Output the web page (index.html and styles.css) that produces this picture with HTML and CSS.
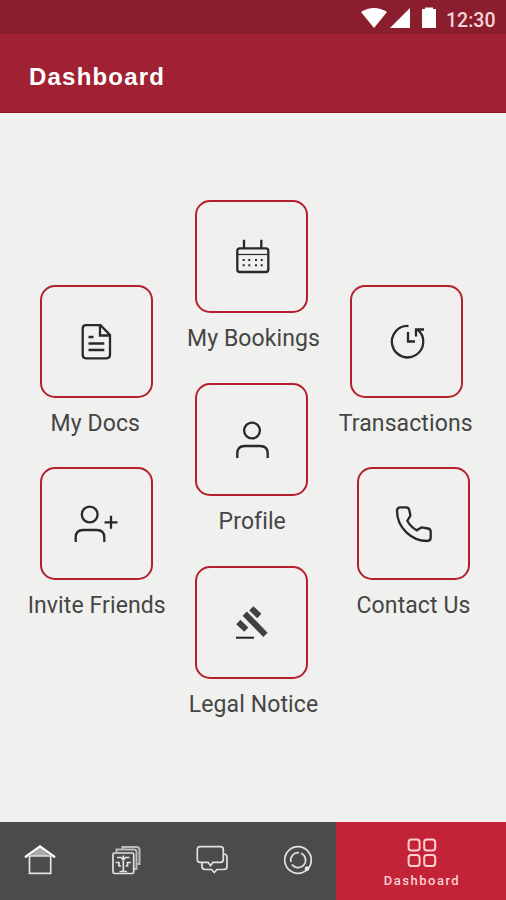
FILE: index.html
```
<!DOCTYPE html>
<html lang="en">
<head>
    <meta charset="UTF-8">
    <title>Dashboard</title>
    <link rel="stylesheet" href="styles.css">
</head>
<body>
    <div class="status-bar">
        <svg class="status-icons" width="78" height="24" viewBox="0 0 78 24">
            <path d="M1 6Q14-2 27 6L14 22Z"/>
            <path d="M50 2V22H30Z"/>
            <path d="M62 3h3V1.500h8V3h3v19H62Z"/>
        </svg>
        <span class="time">12:30</span>
    </div>
    <header class="header">
        <h1>Dashboard</h1>
    </header>

    <main class="menu">
        <div class="column side">
            <a class="item">
                <span class="tile">
                    <svg class="icon" viewBox="0 0 60 60">
                        <path d="M20 13.200H34.500L44 23V42.800Q44 46.300 40.500 46.300H20Q16.700 46.300 16.700 42.800V16.700Q16.700 13.200 20 13.200Z"/>
                        <path d="M34 13.500V23.500H44M22.500 25H27.500M22.500 31.500H38.300M22.500 38H38.300"/>
                    </svg>
                </span>
                <span class="label docs">My Docs</span>
            </a>
            <a class="item">
                <span class="tile">
                    <svg class="icon" viewBox="0 0 60 60">
                        <circle cx="23.700" cy="20.500" r="7.900"/>
                        <path d="M9.700 48V43.500Q9.700 36 17.200 36H30.800Q38.300 36 38.300 43.500V48M45 21.800V34.800M38.500 28.300H51.500"/>
                    </svg>
                </span>
                <span class="label invite">Invite Friends</span>
            </a>
        </div>

        <div class="column middle">
            <a class="item">
                <span class="tile">
                    <svg class="icon" viewBox="0 0 60 60">
                        <rect x="15.300" y="21.300" width="31" height="23.700" rx="2.500"/>
                        <path class="thin" d="M15.300 27.500H46.300"/>
                        <path d="M22 12.700V21M39.300 12.700V21"/>
                        <path class="dots" d="M20.700 33h2M26.300 33h2M33 33h2M38.700 33h2M20.700 38.300h2M26.300 38.300h2M33 38.300h2M38.700 38.300h2"/>
                    </svg>
                </span>
                <span class="label bookings">My Bookings</span>
            </a>
            <a class="item">
                <span class="tile">
                    <svg class="icon" viewBox="0 0 60 60">
                        <circle cx="30" cy="20.500" r="7.900"/>
                        <path d="M15.300 48V43.500Q15.300 36 22.800 36H38.200Q45.700 36 45.700 43.500V48"/>
                    </svg>
                </span>
                <span class="label profile">Profile</span>
            </a>
            <a class="item">
                <span class="tile">
                    <svg class="icon gavel" viewBox="0 0 60 60">
                        <path d="M22.700 20.700L43.500 41.800M29.300 15.300L37.300 23M16.300 29L24.300 36.700"/>
                        <path class="base" d="M14 44.700H32"/>
                    </svg>
                </span>
                <span class="label legal">Legal Notice</span>
            </a>
        </div>

        <div class="column side">
            <a class="item">
                <span class="tile">
                    <svg class="icon" viewBox="0 0 60 60">
                        <path d="M31.500 14A15.700 15.700 0 1 0 40.500 17.500"/>
                        <path d="M31 20V29.500H38M39 24.500V17.500H47"/>
                    </svg>
                </span>
                <span class="label transactions">Transactions</span>
            </a>
            <a class="item contact-item">
                <span class="tile">
                    <svg class="icon" viewBox="0 0 60 60">
                        <path d="M16.500 13.300H22Q24.700 13.300 25.200 15.800L26.300 20.800Q26.500 22 25.500 23.200L23.300 26.700Q26.500 32.700 32.700 36.300L36.500 34Q37.500 33.300 39 33.600L44 34.500Q46.700 35 46.700 37.700V43.500Q46.700 47 43 47C28 47 13 34 13 16.800Q13 13.300 16.500 13.300Z"/>
                    </svg>
                </span>
                <span class="label contact">Contact Us</span>
            </a>
        </div>
    </main>

    <nav class="nav">
        <div class="nav-links">
            <svg class="nav-icon" viewBox="0 0 36 36">
                <path class="shade" d="M8 14L18 6L28 14Z"/>
                <path class="roof" d="M3 15.300L18 4.500L33 15.300"/>
                <path d="M7.500 14V31.300H28.700V14H7.500"/>
            </svg>
            <svg class="nav-icon" viewBox="0 0 36 36">
                <path class="layer" d="M8.500 10V7.500H26Q28.500 7.500 28.500 10V27H26M14.500 7V5H28.500Q31.500 5 31.500 8V22H29"/>
                <rect x="5" y="11" width="20.700" height="20.500" rx="1.500"/>
                <path d="M15.300 13.500V29.500M9 15.500H13L15.300 18L17.600 15.500H21.600M7.500 20.500H11V24H13M23 20.500H19.500V24H17.600M11.500 29.500H19"/>
            </svg>
            <svg class="nav-icon" viewBox="0 0 36 36">
                <path d="M6 4.700H26.500Q29.300 4.700 29.300 7.500V17.500Q29.300 20.300 26.500 20.300H19L16.500 23.500L14 20.300H6Q3.300 20.300 3.300 17.500V7.500Q3.300 4.700 6 4.700Z"/>
                <path d="M29.500 12Q33 12 33 15V24.500Q33 27.500 30 27.500H23L20.300 30.500L17.600 27.500H11Q8 27.500 8 24.500V21"/>
            </svg>
            <svg class="nav-icon" viewBox="0 0 36 36">
                <circle cx="18" cy="18" r="13.300"/>
                <path d="M21 11.200A7.500 7.500 0 1 1 12 22.500M11 20A7.500 7.500 0 0 1 19 10.600"/>
                <circle class="dot" cx="27" cy="26.700" r="1.500"/>
            </svg>
        </div>
        <div class="nav-active">
            <svg class="grid-icon" viewBox="0 0 30 30">
                <rect x="1.600" y="1.600" width="11" height="11" rx="2.800"/>
                <rect x="17.200" y="1.600" width="11" height="11" rx="2.800"/>
                <rect x="1.600" y="17" width="11" height="11" rx="2.800"/>
                <rect x="17.200" y="17" width="11" height="11" rx="2.800"/>
            </svg>
            <span class="nav-label">Dashboard</span>
        </div>
    </nav>
</body>
</html>
```
FILE: styles.css
```
body {
    margin: 0;
    height: 900px;
    display: flex;
    flex-direction: column;
    background: #f0f0ee;
    font-family: Roboto, Arial, sans-serif;
    overflow: hidden;
}
.status-bar {
    height: 34px;
    box-sizing: border-box;
    padding: 6px 11px 0 0;
    display: flex;
    justify-content: flex-end;
    background: #8b1e2e;
}
.status-icons {
    fill: #fff;
    margin-right: 8px;
}
.time {
    width: 49px;
    font-size: 19.5px;
    font-weight: 500;
    line-height: 29px;
    color: #f5d3d6;
    white-space: nowrap;
}
.header {
    height: 79px;
    box-sizing: border-box;
    border-bottom: 1px solid #981425;
    padding-left: 29px;
    display: flex;
    align-items: center;
    background: #a02232;
}
h1 {
    margin: 8px 0 0;
    font-family: "Liberation Sans", Arial, sans-serif;
    font-size: 24px;
    line-height: 28px;
    letter-spacing: 1.2px;
    color: #fff;
}
.menu {
    flex: 1;
    padding-left: 19.5px;
    display: grid;
    grid-template-columns: 153px 158px 152px;
    align-items: start;
}
.column {
    display: flex;
    flex-direction: column;
}
.side {
    padding-top: 172px;
}
.middle {
    padding-top: 87px;
}
.item {
    height: 183px;
    display: flex;
    flex-direction: column;
    align-items: center;
}
.side .item {
    height: 182px;
}
.contact-item {
    margin-right: -14px;
}
.tile {
    width: 113px;
    height: 113px;
    box-sizing: border-box;
    border: 2px solid #b5202d;
    border-radius: 15px;
    display: flex;
    align-items: center;
    justify-content: center;
}
.icon {
    width: 60px;
    height: 60px;
    fill: none;
    stroke: #292929;
    stroke-width: 2.3;
}
.icon .thin {
    stroke-width: 1.2;
}
.icon .dots {
    stroke-width: 2;
}
.gavel {
    stroke: #414141;
    stroke-width: 6;
}
.gavel .base {
    stroke: #222;
    stroke-width: 2;
}
.label {
    margin-top: 12px;
    font-size: 23px;
    line-height: 28px;
    letter-spacing: 0.1px;
    color: #454545;
    white-space: nowrap;
}
.bookings, .legal {
    padding-left: 4px;
}
.docs, .transactions {
    padding-right: 1.5px;
}
.invite, .profile {
    padding-left: 1.5px;
}
.nav {
    height: 78px;
    display: flex;
    color: #fff;
}
.nav-links {
    width: 336px;
    box-sizing: border-box;
    padding: 20px 0 0 22px;
    display: flex;
    gap: 50px;
    background: #4b4b4b;
}
.nav-icon {
    width: 36px;
    height: 36px;
    flex: none;
    fill: none;
    stroke: #e2e2e2;
    stroke-width: 1.7;
}
.nav-icon .shade {
    fill: #aaa;
    stroke: none;
}
.nav-icon .roof {
    stroke: #fff;
    stroke-width: 2.4;
}
.nav-icon .layer {
    stroke: #bbb;
    stroke-width: 2;
}
.nav-icon .dot {
    fill: #fff;
}
.nav-active {
    flex: 1;
    padding: 16px 0 0 2px;
    display: flex;
    flex-direction: column;
    align-items: center;
    background: #c32336;
}
.grid-icon {
    width: 30px;
    height: 30px;
    fill: none;
    stroke: #ffd0d0;
    stroke-width: 2;
}
.nav-label {
    margin-top: 4px;
    font-size: 13px;
    font-weight: 500;
    line-height: 17px;
    letter-spacing: 1.5px;
    color: #fbd0d3;
}
```
